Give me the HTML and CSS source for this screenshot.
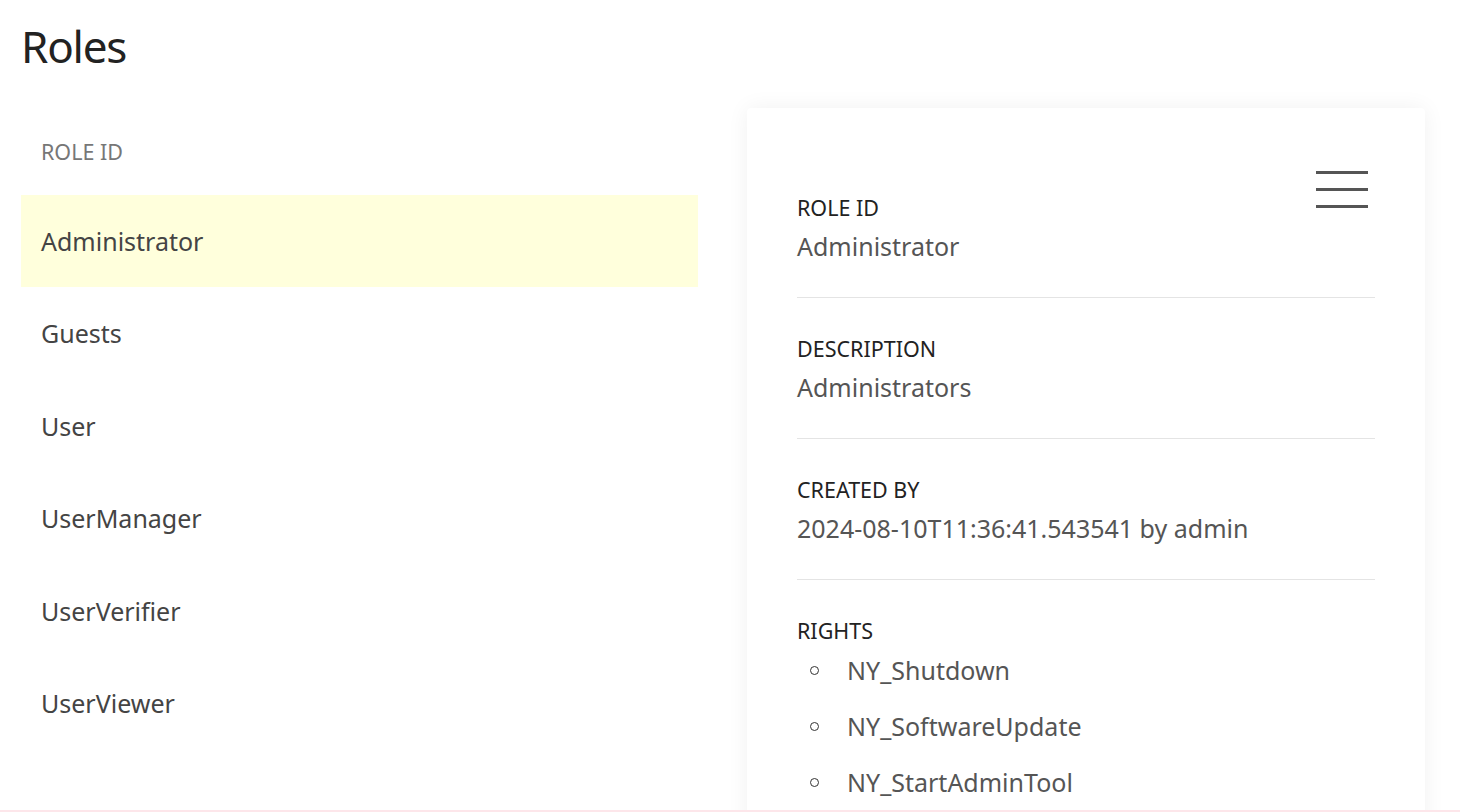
FILE: index.html
```html
<!DOCTYPE html>
<html lang="en">
<head>
<meta charset="utf-8">
<title>Roles</title>
<link rel="stylesheet" href="styles.css">
</head>
<body>
<div class="page">
  <h1 class="title">Roles</h1>
  <div class="layout">
    <div class="role-list">
      <div class="role-list-header">ROLE ID</div>
      <div class="role-row selected">Administrator</div>
      <div class="role-row">Guests</div>
      <div class="role-row">User</div>
      <div class="role-row">UserManager</div>
      <div class="role-row">UserVerifier</div>
      <div class="role-row">UserViewer</div>
    </div>
    <div class="card">
      <button class="menu-btn" aria-label="Menu">
        <svg width="54" height="40" viewBox="0 0 54 40">
          <rect x="1" y="1" width="52" height="3" fill="#555"/>
          <rect x="1" y="18" width="52" height="3" fill="#555"/>
          <rect x="1" y="35" width="52" height="3" fill="#555"/>
        </svg>
      </button>
      <div class="field">
        <div class="field-label">ROLE ID</div>
        <div class="field-value">Administrator</div>
      </div>
      <div class="field">
        <div class="field-label">DESCRIPTION</div>
        <div class="field-value">Administrators</div>
      </div>
      <div class="field">
        <div class="field-label">CREATED BY</div>
        <div class="field-value">2024-08-10T11:36:41.543541 by admin</div>
      </div>
      <div class="field last">
        <div class="field-label">RIGHTS</div>
        <ul class="rights">
          <li>NY_Shutdown</li>
          <li>NY_SoftwareUpdate</li>
          <li>NY_StartAdminTool</li>
        </ul>
      </div>
    </div>
  </div>
</div>
<div class="bottom-line"></div>
</body>
</html>
```
FILE: styles.css
```css
html, body {
  margin: 0;
  padding: 0;
  background: #fff;
  overflow: hidden;
}
body {
  font-family: "Noto Sans", "Open Sans", "Liberation Sans", sans-serif;
  color: #444;
}
.page {
  padding: 0 35px 0 21px;
}
.title {
  margin: 0;
  padding-top: 22px;
  font-size: 44px;
  line-height: 48px;
  font-weight: 400;
  color: #222;
  letter-spacing: -1.2px;
}
.layout {
  margin-top: 30px;
  display: grid;
  grid-template-columns: 677px 678px;
  column-gap: 49px;
  align-items: start;
}
.role-list-header {
  padding: 38px 20px 29px;
  font-size: 21.5px;
  line-height: 28px;
  color: #777;
}
.role-row {
  padding: 32px 20px;
  font-size: 25px;
  line-height: 28.4px;
  color: #444;
}
.role-row.selected {
  background: #ffffdc;
}
.card {
  position: relative;
  margin-top: 8px;
  padding: 49px 50px 0;
  background: #fff;
  border-radius: 4px;
  box-shadow: 0 0 22px rgba(0, 0, 0, 0.06);
  min-height: 760px;
}
.menu-btn {
  position: absolute;
  top: 62px;
  right: 56px;
  padding: 0;
  border: 0;
  background: transparent;
  line-height: 0;
}
.field {
  padding: 38px 0 36px;
  border-bottom: 1px solid #e4e4e4;
}
.field.last {
  border-bottom: 0;
}
.field-label {
  font-size: 21.5px;
  line-height: 26px;
  color: #222;
}
.field-value {
  margin-top: 10px;
  font-size: 25px;
  line-height: 30px;
  color: #555;
}
.rights {
  list-style: none;
  margin: 11px 0 0;
  padding: 0 0 0 50px;
}
.rights li {
  position: relative;
  font-size: 25px;
  line-height: 30px;
  color: #555;
  margin-bottom: 26px;
}
.rights li::before {
  content: "";
  position: absolute;
  left: -37px;
  top: 11px;
  width: 7px;
  height: 7px;
  border: 1px solid #333;
  border-radius: 50%;
}
.bottom-line {
  position: fixed;
  left: 0;
  right: 0;
  bottom: 0;
  height: 2px;
  background: #fde6ea;
}
```
